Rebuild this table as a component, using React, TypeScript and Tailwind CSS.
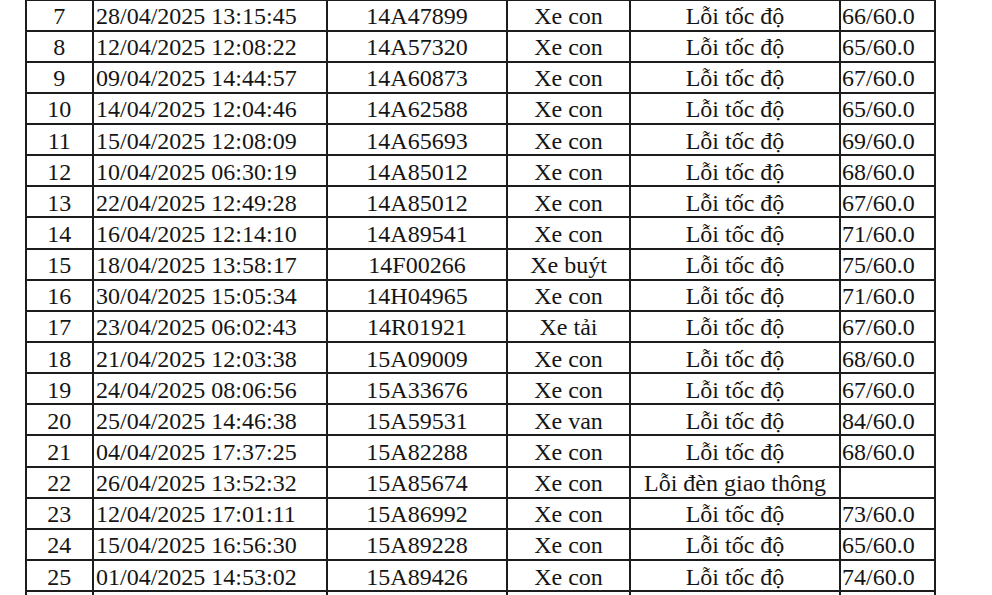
import React from "react";

const rows: [string, string, string, string, string, string][] = [
  ["7", "28/04/2025 13:15:45", "14A47899", "Xe con", "Lỗi tốc độ", "66/60.0"],
  ["8", "12/04/2025 12:08:22", "14A57320", "Xe con", "Lỗi tốc độ", "65/60.0"],
  ["9", "09/04/2025 14:44:57", "14A60873", "Xe con", "Lỗi tốc độ", "67/60.0"],
  ["10", "14/04/2025 12:04:46", "14A62588", "Xe con", "Lỗi tốc độ", "65/60.0"],
  ["11", "15/04/2025 12:08:09", "14A65693", "Xe con", "Lỗi tốc độ", "69/60.0"],
  ["12", "10/04/2025 06:30:19", "14A85012", "Xe con", "Lỗi tốc độ", "68/60.0"],
  ["13", "22/04/2025 12:49:28", "14A85012", "Xe con", "Lỗi tốc độ", "67/60.0"],
  ["14", "16/04/2025 12:14:10", "14A89541", "Xe con", "Lỗi tốc độ", "71/60.0"],
  ["15", "18/04/2025 13:58:17", "14F00266", "Xe buýt", "Lỗi tốc độ", "75/60.0"],
  ["16", "30/04/2025 15:05:34", "14H04965", "Xe con", "Lỗi tốc độ", "71/60.0"],
  ["17", "23/04/2025 06:02:43", "14R01921", "Xe tải", "Lỗi tốc độ", "67/60.0"],
  ["18", "21/04/2025 12:03:38", "15A09009", "Xe con", "Lỗi tốc độ", "68/60.0"],
  ["19", "24/04/2025 08:06:56", "15A33676", "Xe con", "Lỗi tốc độ", "67/60.0"],
  ["20", "25/04/2025 14:46:38", "15A59531", "Xe van", "Lỗi tốc độ", "84/60.0"],
  ["21", "04/04/2025 17:37:25", "15A82288", "Xe con", "Lỗi tốc độ", "68/60.0"],
  ["22", "26/04/2025 13:52:32", "15A85674", "Xe con", "Lỗi đèn giao thông", ""],
  ["23", "12/04/2025 17:01:11", "15A86992", "Xe con", "Lỗi tốc độ", "73/60.0"],
  ["24", "15/04/2025 16:56:30", "15A89228", "Xe con", "Lỗi tốc độ", "65/60.0"],
  ["25", "01/04/2025 14:53:02", "15A89426", "Xe con", "Lỗi tốc độ", "74/60.0"],
  ["26", "", "", "", "Lỗi tốc độ", ""],
];

export default function App() {
  return (
    <div className="h-[595px] w-[992px] overflow-hidden bg-white font-['Liberation_Serif','Times_New_Roman',serif] text-[#151515]">
      <div className="ml-[24.5px] mt-[-1.5px] w-fit border-l-2 border-t-2 border-[#1c1c1c] text-[24px] leading-none">
        {rows.map((r) => (
          <div key={r[0]} className="flex h-[31.15px] border-b-2 border-[#1c1c1c]">
            <div className="flex w-[67.5px] items-center justify-center whitespace-nowrap border-r-2 border-[#1c1c1c] pt-[2px]">{r[1] ? r[0] : ""}</div>
            <div className="flex w-[234px] items-center justify-start whitespace-nowrap border-r-2 border-[#1c1c1c] pl-[2px] pt-[2px]">{r[1]}</div>
            <div className="flex w-[180px] items-center justify-center whitespace-nowrap border-r-2 border-[#1c1c1c] pt-[2px]">{r[2]}</div>
            <div className="flex w-[123px] items-center justify-center whitespace-nowrap border-r-2 border-[#1c1c1c] pt-[2px]">{r[3]}</div>
            <div className="flex w-[210px] items-center justify-center whitespace-nowrap border-r-2 border-[#1c1c1c] pt-[2px]">{r[4]}</div>
            <div className="flex w-[95px] items-center justify-start whitespace-nowrap border-r-2 border-[#1c1c1c] pl-[1px] pt-[2px]">{r[5]}</div>
          </div>
        ))}
      </div>
    </div>
  );
}
